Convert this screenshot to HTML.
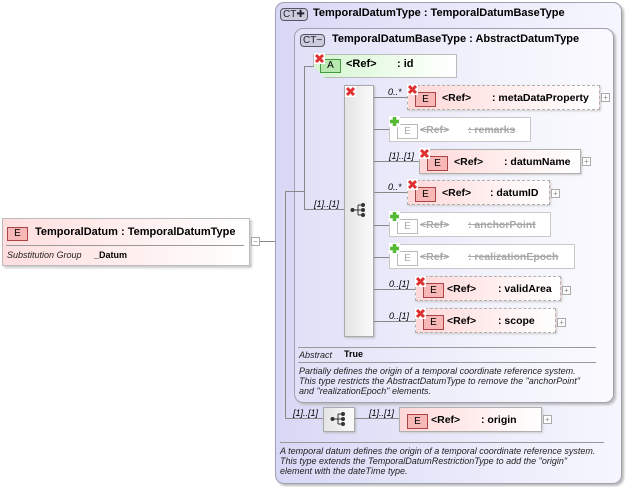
<!DOCTYPE html>
<html><head><meta charset="utf-8"><style>
*{margin:0;padding:0;box-sizing:border-box}
body{width:628px;height:487px;background:#fff;position:relative;overflow:hidden;font-family:"Liberation Sans",sans-serif;font-size:11px;color:#000}
.a{position:absolute}
.ct{border:1px solid #a0a0b0;border-radius:9px;box-shadow:2px 2px 2px #bbb}
.outer{left:275px;top:2px;width:347px;height:482px;background:linear-gradient(90deg,#d8d8f6,#eeeefc 70%,#f6f6fe)}
.inner{left:294px;top:28px;width:320px;height:375px;background:linear-gradient(90deg,#e0e0f8,#f2f2fc 60%,#fafafe)}
.cti{height:13px;border:1px solid #556;border-radius:4px;background:#ccd;font-size:10px;line-height:11px;padding:0 2px;color:#223}
.b{font-weight:bold}
.el{height:25px;border:1px dashed #b0b0b0;background:linear-gradient(90deg,#ffd8d8,#fff4f4 70%,#fff);box-shadow:1px 1px 2px #ccc;font-weight:bold;line-height:24px;font-size:10.5px;white-space:nowrap}
.el.s{border-style:solid}
.ei{position:absolute;left:7px;top:6px;width:21px;height:15px;border:1px solid #a44;background:#f8b8b8;font-size:10px;font-weight:normal;line-height:13px;text-align:center}
.dis{height:25px;border:1px solid #c8c8c8;background:#fff;color:#a8a8a8;font-weight:bold;line-height:24px;white-space:nowrap;font-size:10.5px}
.dis .ei{border-color:#bbb;background:#fff;color:#aaa}
.dis span{text-decoration:line-through}
.x,.p{position:absolute;width:11px;height:11px}
.pl{position:absolute;width:9px;height:9px;border:1px solid #aaa;background:#fff;font-size:8px;line-height:7px;text-align:center;color:#888}
.ln{position:absolute;background:#888}
.c{font-size:9px;font-style:italic}
.it{font-style:italic;font-size:9px;line-height:10px;color:#222}
</style></head><body>
<svg width="0" height="0" style="position:absolute"><defs>
<symbol id="X" viewBox="0 0 11 11"><rect width="11" height="11" fill="#fff"/><path d="M2 2L9 9M9 2L2 9" stroke="#e03030" stroke-width="3"/></symbol>
<symbol id="P" viewBox="0 0 11 11"><rect width="11" height="11" fill="#fff"/><path d="M5.5 1V10M1 5.5H10" stroke="#5b3" stroke-width="3.5"/></symbol>
</defs></svg>

<div class="a" style="left:2px;top:218px;width:248px;height:48px;border:1px solid #bbb;background:linear-gradient(90deg,#ffdede,#fff5f5 70%,#fff);box-shadow:2px 2px 2px #ccc">
 <div class="a" style="left:4px;top:8px;width:21px;height:14px;border:1px solid #a44;background:#f8b8b8;font-size:10px;line-height:12px;text-align:center">E</div>
 <div class="a b" style="left:32px;top:7px;font-size:11px">TemporalDatum : TemporalDatumType</div>
 <div class="a" style="left:3px;top:26px;width:238px;height:1px;background:#999"></div>
 <div class="a it" style="left:4px;top:31px">Substitution Group</div>
 <div class="a" style="left:91px;top:31px;font-size:9px;font-weight:bold">_Datum</div>
</div>
<div class="pl" style="left:251px;top:237px">−</div>
<div class="ln" style="left:260px;top:241px;width:24px;height:1px"></div>

<div class="a ct outer"></div>
<div class="a cti" style="left:280px;top:8px">CT✚</div>
<div class="a b" style="left:313px;top:7px">TemporalDatumType : TemporalDatumBaseType</div>
<div class="a ct inner"></div>
<div class="a cti" style="left:300px;top:34px">CT−</div>
<div class="a b" style="left:332px;top:33px">TemporalDatumBaseType : AbstractDatumType</div>

<div class="ln" style="left:285px;top:191px;width:1px;height:228px"></div>
<div class="ln" style="left:285px;top:191px;width:20px;height:1px"></div>
<div class="ln" style="left:285px;top:418px;width:38px;height:1px"></div>
<div class="ln" style="left:304px;top:66px;width:1px;height:143px"></div>
<div class="ln" style="left:304px;top:66px;width:12px;height:1px"></div>
<div class="ln" style="left:304px;top:209px;width:40px;height:1px"></div>
<div class="a c" style="left:314px;top:199px">[1]..[1]</div>

<div class="a" style="left:313px;top:54px;width:144px;height:24px;border:1px solid #bbb;background:linear-gradient(90deg,#d4f4d0,#f4fff2 70%,#fff);clip-path:polygon(0 0,100% 0,100% 100%,12px 100%,0 12px)"></div>
<div class="a" style="left:320px;top:59px;width:21px;height:14px;border:1px solid #494;background:#b8e8b0;font-size:10px;line-height:12px;text-align:center">A</div>
<svg class="x" style="left:314px;top:53px"><use href="#X"/></svg>
<div class="a b" style="left:346px;top:58px">&lt;Ref&gt;</div>
<div class="a b" style="left:397px;top:58px">: id</div>

<div class="a" style="left:344px;top:85px;width:30px;height:252px;border:1px solid #aaa;background:linear-gradient(90deg,#e4e4e4,#fafafa);box-shadow:1px 1px 2px #bbb"></div>
<svg class="x" style="left:345px;top:86px"><use href="#X"/></svg>
<svg class="a" style="left:350px;top:202px" width="20" height="16"><path d="M2 8H8M8 3V13M8 3H13M8 8H13M8 13H13" stroke="#333" fill="none"/><circle cx="2.5" cy="8" r="2" fill="#333"/><circle cx="13" cy="3" r="2" fill="#333"/><circle cx="13" cy="8" r="2" fill="#333"/><circle cx="13" cy="13" r="2" fill="#333"/></svg>

<div class="ln" style="left:374px;top:97px;width:33px;height:1px"></div><div class="a c" style="left:388px;top:87px">0..*</div>
<div class="a el" style="left:407px;top:85px;width:193px"><div class="ei">E</div><span class="a" style="left:34px">&lt;Ref&gt;</span><span class="a" style="left:84px">: metaDataProperty</span></div>
<svg class="x" style="left:407px;top:84px"><use href="#X"/></svg><div class="pl" style="left:601px;top:93px">+</div>

<div class="ln" style="left:374px;top:129px;width:15px;height:1px"></div>
<div class="a dis" style="left:389px;top:117px;width:142px"><div class="ei">E</div><span class="a" style="left:30px">&lt;Ref&gt;</span><span class="a" style="left:78px">: remarks</span></div>
<svg class="p" style="left:389px;top:116px"><use href="#P"/></svg>

<div class="ln" style="left:374px;top:161px;width:45px;height:1px"></div><div class="a c" style="left:389px;top:151px">[1]..[1]</div>
<div class="a el s" style="left:419px;top:149px;width:162px"><div class="ei">E</div><span class="a" style="left:34px">&lt;Ref&gt;</span><span class="a" style="left:84px">: datumName</span></div>
<svg class="x" style="left:419px;top:148px"><use href="#X"/></svg><div class="pl" style="left:582px;top:157px">+</div>

<div class="ln" style="left:374px;top:192px;width:33px;height:1px"></div><div class="a c" style="left:388px;top:182px">0..*</div>
<div class="a el" style="left:407px;top:180px;width:143px"><div class="ei">E</div><span class="a" style="left:34px">&lt;Ref&gt;</span><span class="a" style="left:82px">: datumID</span></div>
<svg class="x" style="left:407px;top:179px"><use href="#X"/></svg><div class="pl" style="left:551px;top:189px">+</div>

<div class="ln" style="left:374px;top:225px;width:15px;height:1px"></div>
<div class="a dis" style="left:389px;top:212px;width:162px"><div class="ei">E</div><span class="a" style="left:30px">&lt;Ref&gt;</span><span class="a" style="left:78px">: anchorPoint</span></div>
<svg class="p" style="left:389px;top:211px"><use href="#P"/></svg>

<div class="ln" style="left:374px;top:257px;width:15px;height:1px"></div>
<div class="a dis" style="left:389px;top:244px;width:186px"><div class="ei">E</div><span class="a" style="left:30px">&lt;Ref&gt;</span><span class="a" style="left:78px">: realizationEpoch</span></div>
<svg class="p" style="left:389px;top:243px"><use href="#P"/></svg>

<div class="ln" style="left:374px;top:289px;width:41px;height:1px"></div><div class="a c" style="left:389px;top:279px">0..[1]</div>
<div class="a el" style="left:415px;top:276px;width:146px"><div class="ei">E</div><span class="a" style="left:31px">&lt;Ref&gt;</span><span class="a" style="left:82px">: validArea</span></div>
<svg class="x" style="left:415px;top:276px"><use href="#X"/></svg><div class="pl" style="left:562px;top:286px">+</div>

<div class="ln" style="left:374px;top:321px;width:41px;height:1px"></div><div class="a c" style="left:389px;top:311px">0..[1]</div>
<div class="a el" style="left:415px;top:308px;width:141px"><div class="ei">E</div><span class="a" style="left:31px">&lt;Ref&gt;</span><span class="a" style="left:82px">: scope</span></div>
<svg class="x" style="left:415px;top:308px"><use href="#X"/></svg><div class="pl" style="left:557px;top:318px">+</div>

<div class="a" style="left:298px;top:347px;width:298px;height:1px;background:#999"></div>
<div class="a it" style="left:299px;top:350px">Abstract</div>
<div class="a" style="left:344px;top:349px;font-size:9px;font-weight:bold">True</div>
<div class="a" style="left:298px;top:362px;width:298px;height:1px;background:#999"></div>
<div class="a it" style="left:299px;top:366px">Partially defines the origin of a temporal coordinate reference system.<br>This type restricts the AbstractDatumType to remove the "anchorPoint"<br>and "realizationEpoch" elements.</div>

<div class="a c" style="left:293px;top:408px">[1]..[1]</div>
<div class="a" style="left:323px;top:407px;width:32px;height:25px;border:1px solid #aaa;background:linear-gradient(90deg,#e4e4e4,#fafafa);box-shadow:1px 1px 2px #bbb"></div>
<svg class="a" style="left:330px;top:411px" width="20" height="16"><path d="M2 8H8M8 3V13M8 3H13M8 8H13M8 13H13" stroke="#333" fill="none"/><circle cx="2.5" cy="8" r="2" fill="#333"/><circle cx="13" cy="3" r="2" fill="#333"/><circle cx="13" cy="8" r="2" fill="#333"/><circle cx="13" cy="13" r="2" fill="#333"/></svg>
<div class="ln" style="left:355px;top:418px;width:44px;height:1px"></div><div class="a c" style="left:369px;top:408px">[1]..[1]</div>
<div class="a el s" style="left:399px;top:407px;width:143px"><div class="ei">E</div><span class="a" style="left:31px">&lt;Ref&gt;</span><span class="a" style="left:81px">: origin</span></div>
<div class="pl" style="left:543px;top:415px">+</div>

<div class="a" style="left:280px;top:442px;width:324px;height:1px;background:#999"></div>
<div class="a it" style="left:280px;top:446px">A temporal datum defines the origin of a temporal coordinate reference system.<br>This type extends the TemporalDatumRestrictionType to add the "origin"<br>element with the dateTime type.</div>
</body></html>
